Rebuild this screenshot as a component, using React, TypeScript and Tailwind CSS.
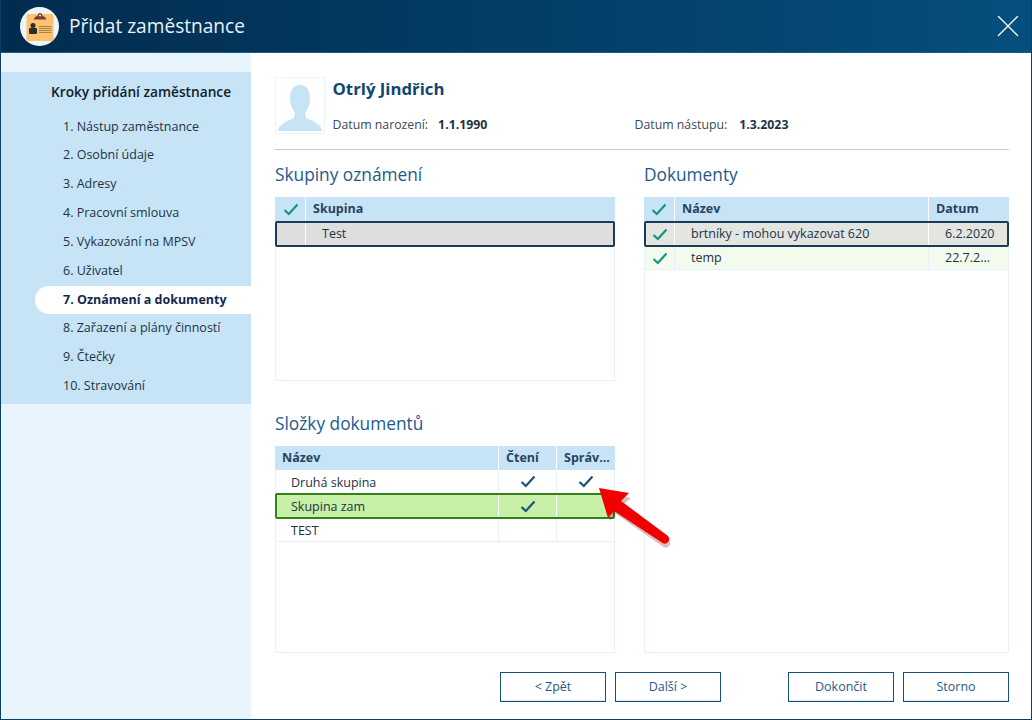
import { X } from "lucide-react";

const steps = [
  "1. Nástup zaměstnance",
  "2. Osobní údaje",
  "3. Adresy",
  "4. Pracovní smlouva",
  "5. Vykazování na MPSV",
  "6. Uživatel",
  "7. Oznámení a dokumenty",
  "8. Zařazení a plány činností",
  "9. Čtečky",
  "10. Stravování",
];

function Tick({ color = "#12977f" }: { color?: string }) {
  return (
    <svg width="16" height="13" viewBox="0 0 16 13" fill="none">
      <path d="M1.5 7 L5.8 11 L14.5 1.5" stroke={color} strokeWidth="2.2" />
    </svg>
  );
}

function Button({ label }: { label: string }) {
  return (
    <button className="w-[106px] h-[30px] border border-[#14517f] text-[12.5px] text-[#1f5a88] bg-white shadow-[inset_0_-1px_0_#dbe9f3]">
      {label}
    </button>
  );
}

function Arrow() {
  return (
    <svg className="absolute left-[590px] top-[481px]" width="90" height="72" viewBox="0 0 90 72" fill="none">
      <path d="M10 9 L39 15 L31 22 L77 57 Q80 61 76 64 Q73 66 70 63 L24 31 L18 38 Z" fill="#7a0000" opacity="0.25" transform="translate(1 2)" />
      <path d="M8 7 L38 12 L30 20 L77 55 Q80 59 76 62 Q73 64 70 61 L23 30 L17 37 Z" fill="#f00000" />
    </svg>
  );
}

export default function App() {
  return (
    <div className="relative w-[1032px] h-[720px] flex flex-col bg-white font-['Open_Sans',sans-serif] text-[12.5px] text-[#1c3344] border border-t-0 border-[#0a3f66] overflow-hidden">
      {/* Title bar */}
      <div className="h-[53px] -mx-px flex items-center shrink-0 bg-gradient-to-r from-[#022c4e] to-[#054f7e] border-b border-[#1d5b87]">
        <div className="ml-[20px] w-[39px] h-[39px] rounded-full bg-[#eef5fa] flex items-center justify-center">
          <svg width="28" height="30" viewBox="0 0 28 30">
            <rect x="0.5" y="3" width="27" height="27" rx="2" fill="#fcc26f" />
            <path d="M8 8.5 Q8 5.5 11.5 5 Q12 2 14 2 Q16 2 16.5 5 Q20 5.5 20 8.5 Z" fill="#7a3b2e" />
            <circle cx="14" cy="4.5" r="1" fill="#eef5fa" />
            <circle cx="7" cy="14.5" r="2.5" fill="#2c2c2c" />
            <rect x="3" y="17" width="8" height="6" rx="1" fill="#2c2c2c" />
            <path d="M13 15.5 H25.5 M13 17.5 H25.5 M13 19.5 H25.5 M13 21.5 H25.5" stroke="#a8824c" strokeWidth="1" />
          </svg>
        </div>
        <div className="ml-[10px] text-[19.1px] text-[#e8f1f7]">Přidat zaměstnance</div>
        <X className="ml-auto mr-[5px] text-white" size={38} strokeWidth={1.3} absoluteStrokeWidth />
      </div>

      <div className="flex flex-1 min-h-0">
        {/* Sidebar */}
        <div className="w-[250px] shrink-0 bg-[#e9f5fc] pt-[19px]">
          <div className="bg-[#c7e4f6] h-[332px] pt-[9px] pl-[34px]">
            <div className="pl-[16px] h-[22px] text-[13.7px] font-semibold text-[#10202c] leading-[22px]">
              Kroky přidání zaměstnance
            </div>
            <div className="mt-[9.5px]">
              {steps.map((s, i) =>
                i === 6 ? (
                  <div key={s} className="h-[28.85px] pl-[28px] leading-[28.85px] bg-white rounded-l-full font-bold text-[#13294b]">
                    {s}
                  </div>
                ) : (
                  <div key={s} className="h-[28.85px] pl-[28px] leading-[28.85px]">
                    {s}
                  </div>
                ),
              )}
            </div>
          </div>
        </div>

        {/* Content */}
        <div className="flex-1 min-w-0 pl-[24px] pr-[22px] pt-[24px]">
          <div className="flex h-[73px] border-b border-[#c4c8cb] w-[734px]">
            <div className="w-[50px] h-[57px] border border-[#eaf5fc] flex items-end justify-center pb-[1px]">
              <svg width="46" height="48" viewBox="0 0 46 48">
                <path d="M23 1 C31 1 33 8 33 15 C33 21 30 26 28 29 L29 34 C35 37 44 39 45 47 H1 C2 39 11 37 17 34 L18 29 C16 26 13 21 13 15 C13 8 15 1 23 1 Z" fill="#c7e4f6" />
              </svg>
            </div>
            <div className="ml-[7.5px] w-[676px]">
              <div className="h-[24px] text-[16.8px] leading-[24px] font-bold text-[#10466f]">Otrlý Jindřich</div>
              <div className="flex mt-[15px] text-[12.3px] leading-[18px]">
                <div className="w-[302px] flex">
                  <span className="text-[#3a4a56]">Datum narození:</span>
                  <span className="ml-[10px] font-bold">1.1.1990</span>
                </div>
                <div className="flex">
                  <span className="text-[#3a4a56]">Datum nástupu:</span>
                  <span className="ml-[12px] font-bold">1.3.2023</span>
                </div>
              </div>
            </div>
          </div>

          <div className="flex mt-[12px] gap-[30px]">
            {/* Left column */}
            <div className="w-[340px]">
              <h2 className="h-[26px] text-[17.3px] leading-[26px] text-[#1c5a8c]">Skupiny oznámení</h2>
              <div className="mt-[9px] h-[184px] border border-[#e7effa] border-t-0">
                <div className="flex h-[24px] bg-[#c7e4f6] font-bold text-[#27435f] leading-[24px] -mx-px">
                  <div className="w-[31px] pl-px flex items-center justify-center border-r border-white"><Tick /></div>
                  <div className="pl-[7px]">Skupina</div>
                </div>
                <div className="flex h-[26px] bg-[#dedede] border-2 border-[#1d3a57] rounded-[2px] leading-[22px] -mx-px">
                  <div className="w-[29px] border-r border-white" />
                  <div className="pl-[16px]">Test</div>
                </div>
              </div>

              <h2 className="mt-[30px] h-[26px] text-[17.3px] leading-[26px] text-[#1c5a8c]">Složky dokumentů</h2>
              <div className="mt-[9px] h-[207px] border border-[#e7effa] border-t-0">
                <div className="flex h-[24px] bg-[#c7e4f6] font-bold text-[#27435f] leading-[24px] -mx-px">
                  <div className="w-[224px] pl-[7px] border-r border-white">Název</div>
                  <div className="w-[58px] pl-[7px] border-r border-white">Čtení</div>
                  <div className="flex-1 pl-[7px]">Správ...</div>
                </div>
                <div className="flex h-[24px] leading-[25px] border-b border-[#e7effa]">
                  <div className="w-[223px] pl-[15px] border-r border-[#e7effa]">Druhá skupina</div>
                  <div className="w-[58px] border-r border-[#e7effa] flex items-center justify-center"><Tick color="#1d527f" /></div>
                  <div className="flex-1 flex items-center justify-center"><Tick color="#1d527f" /></div>
                </div>
                <div className="flex h-[26px] -mt-px -mx-px bg-[#c7f0a6] border-2 border-[#35801c] rounded-[2px] leading-[23px]">
                  <div className="w-[222px] pl-[14px] border-r border-white">Skupina zam</div>
                  <div className="w-[58px] border-r border-white flex items-center justify-center"><Tick color="#1d527f" /></div>
                  <div className="flex-1" />
                </div>
                <div className="flex h-[23px] leading-[23px] border-b border-[#e7effa]">
                  <div className="w-[223px] pl-[15px] border-r border-[#e7effa]">TEST</div>
                  <div className="w-[58px] border-r border-[#e7effa]" />
                  <div className="flex-1" />
                </div>
              </div>
            </div>

            {/* Right column */}
            <div className="w-[364px] -ml-px">
              <h2 className="h-[26px] text-[17.3px] leading-[26px] text-[#1c5a8c]">Dokumenty</h2>
              <div className="mt-[9px] h-[456px] border border-[#e7effa] border-t-0 -mr-px">
                <div className="flex h-[24px] bg-[#c7e4f6] font-bold text-[#27435f] leading-[24px] -mx-px">
                  <div className="w-[31px] flex items-center justify-center border-r border-white"><Tick /></div>
                  <div className="w-[254px] pl-[7px] border-r border-white">Název</div>
                  <div className="flex-1 pl-[7px]">Datum</div>
                </div>
                <div className="flex h-[26px] bg-[#e3e5e1] border-2 border-[#1d3a57] rounded-[2px] leading-[22px] -mx-px">
                  <div className="w-[29px] flex items-center justify-center border-r border-white"><Tick /></div>
                  <div className="w-[254px] pl-[16px] border-r border-white">brtníky - mohou vykazovat 620</div>
                  <div className="flex-1 pl-[16px]">6.2.2020</div>
                </div>
                <div className="flex h-[23px] bg-[#f2fbec] leading-[22px] border-b border-[#e7effa]">
                  <div className="w-[30px] flex items-center justify-center border-r border-[#e7effa]"><Tick /></div>
                  <div className="w-[254px] pl-[16px] border-r border-[#e7effa]">temp</div>
                  <div className="flex-1 pl-[16px]">22.7.2...</div>
                </div>
              </div>
            </div>
          </div>

          {/* Footer buttons */}
          <div className="flex mt-[19px] w-[734px]">
            <div className="ml-[225px] flex gap-[9px]">
              <Button label="< Zpět" />
              <Button label="Další >" />
            </div>
            <div className="ml-auto flex gap-[9px]">
              <Button label="Dokončit" />
              <Button label="Storno" />
            </div>
          </div>
        </div>
      </div>

      <Arrow />
    </div>
  );
}
